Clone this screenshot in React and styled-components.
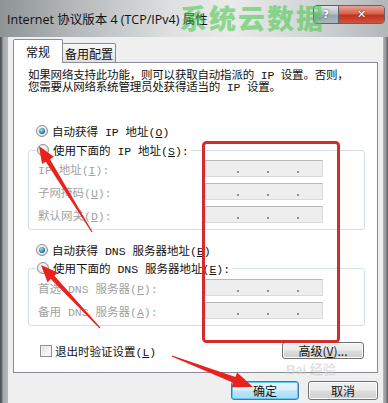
import React from "react";
import styled, { createGlobalStyle, css } from "styled-components";

const Global = createGlobalStyle`
  html, body { margin: 0; padding: 0; background: #7a7e81; }
  #root { width: 388px; height: 403px; }
  * { box-sizing: border-box; }
`;

const UI = `"Noto Sans CJK SC", "Microsoft YaHei", sans-serif`;
const SONG = `"Liberation Mono", "Noto Sans CJK SC", monospace`;

const Screen = styled.div`
  position: relative;
  width: 388px;
  height: 403px;
  overflow: hidden;
  display: flex;
  flex-direction: column;
  background: linear-gradient(
    90deg,
    #47494b 0px,
    #6c6f72 2px,
    #a4a8ab 3px,
    #b4b8bb 8px,
    #b4b8bb 383px,
    #8d9194 386px,
    #5c5f62 388px
  );
`;

const TitleBar = styled.div`
  height: 37px;
  flex: none;
  display: flex;
  align-items: center;
  padding: 0 3px 0 7px;
  background: linear-gradient(
    90deg,
    #8e9396 0%,
    #b6babc 20%,
    #dfe1e2 45%,
    #e9eaea 60%,
    #d2d5d7 80%,
    #b3b7ba 100%
  );
`;

const Title = styled.div`
  flex: 1;
  font-family: "Open Sans", "Noto Sans CJK SC", sans-serif;
  font-size: 12.5px;
  color: #111;
  white-space: nowrap;
`;

const CaptionGroup = styled.div`
  align-self: flex-start;
  margin-top: 5px;
  display: flex;
  border: 1px solid #5d6366;
  border-radius: 4px;
  overflow: hidden;
  height: 19px;
`;

const CaptionButton = styled.div`
  width: ${(p) => p.$w}px;
  height: 100%;
  display: flex;
  align-items: center;
  justify-content: center;
  font-family: "DejaVu Sans", sans-serif;
  font-weight: bold;
  font-size: 11px;
  color: #fff;
  text-shadow: 0 0 2px #333;
  background: ${(p) =>
    p.$close
      ? "linear-gradient(180deg, #e8a496 0%, #d7604a 45%, #c2341c 55%, #d2533d 100%)"
      : "linear-gradient(180deg, #dfe4e8 0%, #b7c1c8 45%, #97a5ae 55%, #aab7bf 100%)"};
  & + & {
    border-left: 1px solid #5d6366;
  }
`;

const Body = styled.div`
  flex: 1;
  margin: 0 5px 0 8px;
  padding: 2px 5px 0 5px;
  background: #efefef;
  display: flex;
  flex-direction: column;
`;

const Tabs = styled.div`
  display: flex;
  align-items: flex-end;
  height: 24px;
`;

const Tab = styled.div`
  font-family: ${UI};
  font-size: 12px;
  color: #111;
  border: 1px solid #898c95;
  border-bottom: none;
  border-radius: 2px 2px 0 0;
  display: flex;
  justify-content: center;
  ${(p) =>
    p.$active
      ? css`
          position: relative;
          z-index: 1;
          width: 50px;
          height: 24px;
          background: #fff;
          align-items: center;
          padding-bottom: 1px;
        `
      : css`
          width: 54px;
          height: 19px;
          margin-left: -1px;
          margin-bottom: 1px;
          background: linear-gradient(180deg, #f7f7f7 0%, #ececec 50%, #e0e0e0 100%);
          align-items: center;
        `}
`;

const Panel = styled.div`
  margin-top: -1px;
  background: #fff;
  border: 1px solid #898c95;
  padding: 0 12px 13px 14px;
  display: flex;
  flex-direction: column;
  font-family: ${SONG};
  font-size: 11.5px;
  color: #111;
`;

const Intro = styled.p`
  margin: 7px 0 0 0;
  line-height: 12px;
  white-space: nowrap;
  letter-spacing: -0.2px;
`;

const RadioRow = styled.label`
  display: flex;
  align-items: center;
  gap: 4px;
  height: 18px;
  padding-left: 8px;
  margin-top: ${(p) => p.$mt || 0}px;
  white-space: nowrap;
`;

const RadioDot = styled.span`
  flex: none;
  width: 12px;
  height: 12px;
  border-radius: 50%;
  border: 1px solid #8c9093;
  background: radial-gradient(circle at 40% 35%, #ffffff 0%, #e6e8ea 55%, #c6cacd 100%);
  display: inline-flex;
  align-items: center;
  justify-content: center;
  ${(p) =>
    p.$checked &&
    css`
      &::after {
        content: "";
        width: 6px;
        height: 6px;
        border-radius: 50%;
        background: radial-gradient(circle at 40% 35%, #9fe6fa 0%, #2f86ad 55%, #153d57 100%);
      }
    `}
`;

const Group = styled.div`
  margin-top: ${(p) => p.$mt}px;
  border: 1px solid #d5dfe5;
  border-radius: 3px;
  padding: 0 0 6px 9px;
  display: flex;
  flex-direction: column;
`;

const GroupCaption = styled(RadioRow)`
  align-self: flex-start;
  margin-top: -10px;
  margin-left: -2px;
  padding: 0 2px 0 1px;
  background: #fff;
`;

const Fields = styled.div`
  display: flex;
  flex-direction: column;
  gap: 6px;
  padding-top: ${(p) => p.$pt}px;
`;

const FieldRow = styled.div`
  display: grid;
  grid-template-columns: 167px 118px;
  align-items: center;
  height: 17px;
`;

const FieldLabel = styled.span`
  color: #a2a2a2;
  white-space: nowrap;
`;

const IpField = styled.div`
  width: 118px;
  height: 17px;
  border: 1px solid #dadada;
  border-top-color: #b9b9b9;
  background: #eeeeee;
  display: flex;
  align-items: center;
  padding-left: 31px;
  gap: 28px;
`;

const Dot = styled.span`
  width: 2px;
  height: 2px;
  margin-top: 6px;
  background: #8f8f8f;
`;

const BottomRow = styled.div`
  display: flex;
  align-items: center;
  justify-content: space-between;
  height: 17px;
  margin-top: 16px;
  padding: 0 1px 0 12px;
`;

const CheckLabel = styled.label`
  display: flex;
  align-items: center;
  gap: 3px;
  white-space: nowrap;
`;

const CheckBox = styled.span`
  width: 12px;
  height: 12px;
  border: 1px solid #8f8f8f;
  background: linear-gradient(135deg, #dcdcdc 0%, #f4f4f4 60%, #ffffff 100%);
  box-shadow: inset 0 0 0 1px #f2f2f2;
`;

const Button = styled.div`
  width: ${(p) => p.$w}px;
  height: ${(p) => p.$h || 17}px;
  border: 1px solid ${(p) => (p.$default ? "#3d7bad" : "#707070")};
  border-radius: 3px;
  display: flex;
  align-items: center;
  justify-content: center;
  font-family: ${UI};
  font-size: 12px;
  color: #111;
  white-space: nowrap;
  background: ${(p) =>
    p.$default
      ? "linear-gradient(180deg, #eaf6fd 0%, #d9f0fc 48%, #bee6fd 52%, #a7d9f5 100%)"
      : "linear-gradient(180deg, #f2f2f2 0%, #ebebeb 48%, #dddddd 52%, #cfcfcf 100%)"};
  box-shadow: inset 0 0 0 1px ${(p) => (p.$default ? "#5fc8f0" : "#fcfcfc")};
`;

const DialogButtons = styled.div`
  margin-top: 8px;
  display: flex;
  justify-content: flex-end;
  gap: 9px;
`;

const Overlay = styled.svg`
  position: absolute;
  left: 0;
  top: 0;
  pointer-events: none;
`;

const Watermark = styled.div`
  position: absolute;
  left: 180px;
  top: 2px;
  font-family: ${UI};
  font-weight: 900;
  font-size: 27px;
  line-height: 32px;
  letter-spacing: 2px;
  color: rgba(60, 200, 60, 0.55);
  pointer-events: none;
  white-space: nowrap;
`;

const BaiduMark = styled.div`
  position: absolute;
  left: 286px;
  top: 359px;
  font-family: "Liberation Sans", "Noto Sans CJK SC", sans-serif;
  font-weight: bold;
  font-size: 13px;
  color: rgba(200, 200, 200, 0.55);
  pointer-events: none;
  white-space: nowrap;
`;

function arrowPath(tx, ty, px, py, headLen, headHalf, shaftHalf) {
  const dx = px - tx;
  const dy = py - ty;
  const len = Math.hypot(dx, dy);
  const ux = dx / len;
  const uy = dy / len;
  const nx = -uy;
  const ny = ux;
  const bx = px - ux * headLen;
  const by = py - uy * headLen;
  const pts = [
    [tx + nx * 0.6, ty + ny * 0.6],
    [bx + nx * shaftHalf, by + ny * shaftHalf],
    [bx + nx * headHalf, by + ny * headHalf],
    [px, py],
    [bx - nx * headHalf, by - ny * headHalf],
    [bx - nx * shaftHalf, by - ny * shaftHalf],
    [tx - nx * 0.6, ty - ny * 0.6],
  ];
  return "M" + pts.map((p) => p[0].toFixed(1) + " " + p[1].toFixed(1)).join(" L") + " Z";
}

const arrows = [
  [92, 232, 39, 146, 17, 7, 2.5],
  [100, 328, 41, 265, 17, 7, 2.5],
  [172, 356, 253, 387, 20, 8, 3],
];

const Acc = ({ k }) => (
  <>
    (<u>{k}</u>)
  </>
);

const Ip = () => (
  <IpField>
    <Dot />
    <Dot />
    <Dot />
  </IpField>
);

export default function App() {
  return (
    <>
      <Global />
      <Screen>
        <TitleBar>
          <Title>Internet 协议版本 4 (TCP/IPv4) 属性</Title>
          <CaptionGroup>
            <CaptionButton $w={24}>?</CaptionButton>
            <CaptionButton $w={46} $close>
              ✕
            </CaptionButton>
          </CaptionGroup>
        </TitleBar>
        <Body>
          <Tabs>
            <Tab $active>常规</Tab>
            <Tab>备用配置</Tab>
          </Tabs>
          <Panel>
            <Intro>
              如果网络支持此功能，则可以获取自动指派的 IP 设置。否则，
              <br />
              您需要从网络系统管理员处获得适当的 IP 设置。
            </Intro>
            <RadioRow $mt={28}>
              <RadioDot $checked />
              <span>
                自动获得 IP 地址<Acc k="O" />
              </span>
            </RadioRow>
            <Group $mt={10}>
              <GroupCaption>
                <RadioDot />
                <span>
                  使用下面的 IP 地址<Acc k="S" />:
                </span>
              </GroupCaption>
              <Fields $pt={1}>
                <FieldRow>
                  <FieldLabel>
                    IP 地址<Acc k="I" />:
                  </FieldLabel>
                  <Ip />
                </FieldRow>
                <FieldRow>
                  <FieldLabel>
                    子网掩码<Acc k="U" />:
                  </FieldLabel>
                  <Ip />
                </FieldRow>
                <FieldRow>
                  <FieldLabel>
                    默认网关<Acc k="D" />:
                  </FieldLabel>
                  <Ip />
                </FieldRow>
              </Fields>
            </Group>
            <RadioRow $mt={11}>
              <RadioDot $checked />
              <span>
                自动获得 DNS 服务器地址<Acc k="B" />
              </span>
            </RadioRow>
            <Group $mt={9}>
              <GroupCaption>
                <RadioDot />
                <span>
                  使用下面的 DNS 服务器地址<Acc k="E" />:
                </span>
              </GroupCaption>
              <Fields $pt={2}>
                <FieldRow>
                  <FieldLabel>
                    首选 DNS 服务器<Acc k="P" />:
                  </FieldLabel>
                  <Ip />
                </FieldRow>
                <FieldRow>
                  <FieldLabel>
                    备用 DNS 服务器<Acc k="A" />:
                  </FieldLabel>
                  <Ip />
                </FieldRow>
              </Fields>
            </Group>
            <BottomRow>
              <CheckLabel>
                <CheckBox />
                <span>
                  退出时验证设置<Acc k="L" />
                </span>
              </CheckLabel>
              <Button $w={82}>
                高级<Acc k="V" />...
              </Button>
            </BottomRow>
          </Panel>
          <DialogButtons>
            <Button $w={68} $h={19} $default>
              确定
            </Button>
            <Button $w={70} $h={19}>
              取消
            </Button>
          </DialogButtons>
        </Body>
        <Watermark>系统云数据</Watermark>
        <BaiduMark>Bai 经验</BaiduMark>
        <Overlay width="388" height="403" viewBox="0 0 388 403">
          <rect
            x="203.5"
            y="142.5"
            width="135"
            height="199"
            rx="3"
            fill="none"
            stroke="#d42c2a"
            strokeWidth="3"
          />
          {arrows.map((a, i) => (
            <path key={i} d={arrowPath(...a)} fill="#e8231f" />
          ))}
        </Overlay>
      </Screen>
    </>
  );
}
